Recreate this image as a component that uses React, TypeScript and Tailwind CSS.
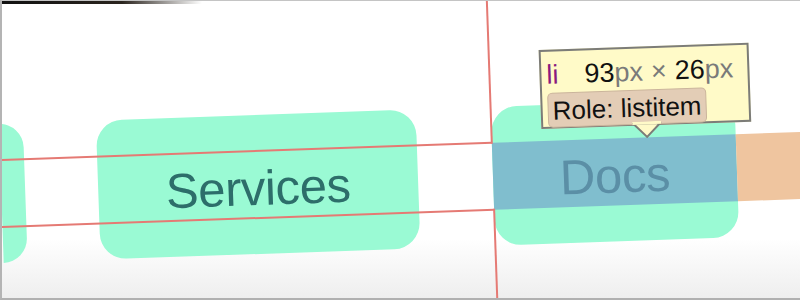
import React from "react";

export default function App() {
  const font = { fontFamily: '"Liberation Sans", Arial, sans-serif' };
  return (
    <div
      className="relative w-[800px] h-[300px] overflow-hidden bg-[linear-gradient(to_bottom,#ffffff_80%,#eeeeee)] border-l-2 border-t border-b-2 border-l-[#b4b4b4] border-t-[#c4c4c4] border-b-[#b0b0b0]"
      style={font}
    >
      <div className="absolute left-0 top-0 w-[200px] h-[3px] bg-[linear-gradient(to_right,#111_0%,#2a241e_60%,transparent)]" />
      <div className="absolute left-[-2px] top-[-1px] w-[800px] h-[300px] rotate-[-2deg] origin-center">
        {/* pills row */}
        <div className="flex items-start pt-[110px] gap-[73px]">
          <div className="w-[24px] h-[139px] bg-[#9afad4] rounded-r-[24px] shrink-0" />
          <div className="w-[320px] h-[139px] bg-[#9afad4] rounded-[26px] shrink-0 flex items-center justify-center pt-[7px]">
            <span className="text-[49px] leading-none tracking-[-0.4px] text-[#2d6e6a]">Services</span>
          </div>
          <div className="relative w-[244px] h-[139px] bg-[#9afad4] rounded-[26px] shrink-0 ml-[2px]">
            <div className="absolute left-0 right-0 top-[36px] h-[67px] bg-[#80bece]" />
            <div className="absolute left-full top-[36px] w-[80px] h-[67px] bg-[#efc59f]" />
            <div className="relative h-full flex items-center justify-center pt-[7px]">
              <span className="text-[49px] leading-none tracking-[-0.4px] text-[#5b8fa6]">Docs</span>
            </div>
          </div>
        </div>

        {/* guide lines */}
        <div className="absolute left-[-60px] top-[145px] w-[552px] h-[2px] bg-[#e57a74]" />
        <div className="absolute left-[-60px] top-[212px] w-[552px] h-[2px] bg-[#e57a74]" />
        <div className="absolute left-[491px] top-[-60px] w-[2px] h-[207px] bg-[#e57a74]" />
        <div className="absolute left-[491px] top-[212px] w-[2px] h-[160px] bg-[#e57a74]" />

        {/* tooltip */}
        <div className="absolute left-[542px] top-[55px] w-[210px] h-[79px] bg-[#fffac8] border-2 border-[#7c7c78] px-[5px] pt-[10px]">
          <div className="flex items-baseline text-[27px] leading-none whitespace-pre">
            <span className="text-[#8a1a7e]">li</span>
            <span className="ml-[26px] text-[#111]">93</span>
            <span className="text-[#7a7a7a]">px</span>
            <span className="text-[#7a7a7a] mx-[8px]">×</span>
            <span className="text-[#111]">26</span>
            <span className="text-[#7a7a7a]">px</span>
          </div>
          <div className="mt-[4px] inline-flex items-center h-[35px] px-[4px] bg-[#e3cdb6] border border-[#cbb59c] rounded-[5px] text-[26px] leading-none text-[#111]">
            Role: listitem
          </div>
        </div>
        <svg className="absolute left-[633px] top-[130px]" width="29" height="17" viewBox="0 0 29 17">
          <polygon points="1,2 14.5,15.5 28,2" fill="#fffac8" stroke="#7c7c78" strokeWidth="2" />
          <rect x="0" y="0" width="29" height="3" fill="#fffac8" />
        </svg>
      </div>
    </div>
  );
}
